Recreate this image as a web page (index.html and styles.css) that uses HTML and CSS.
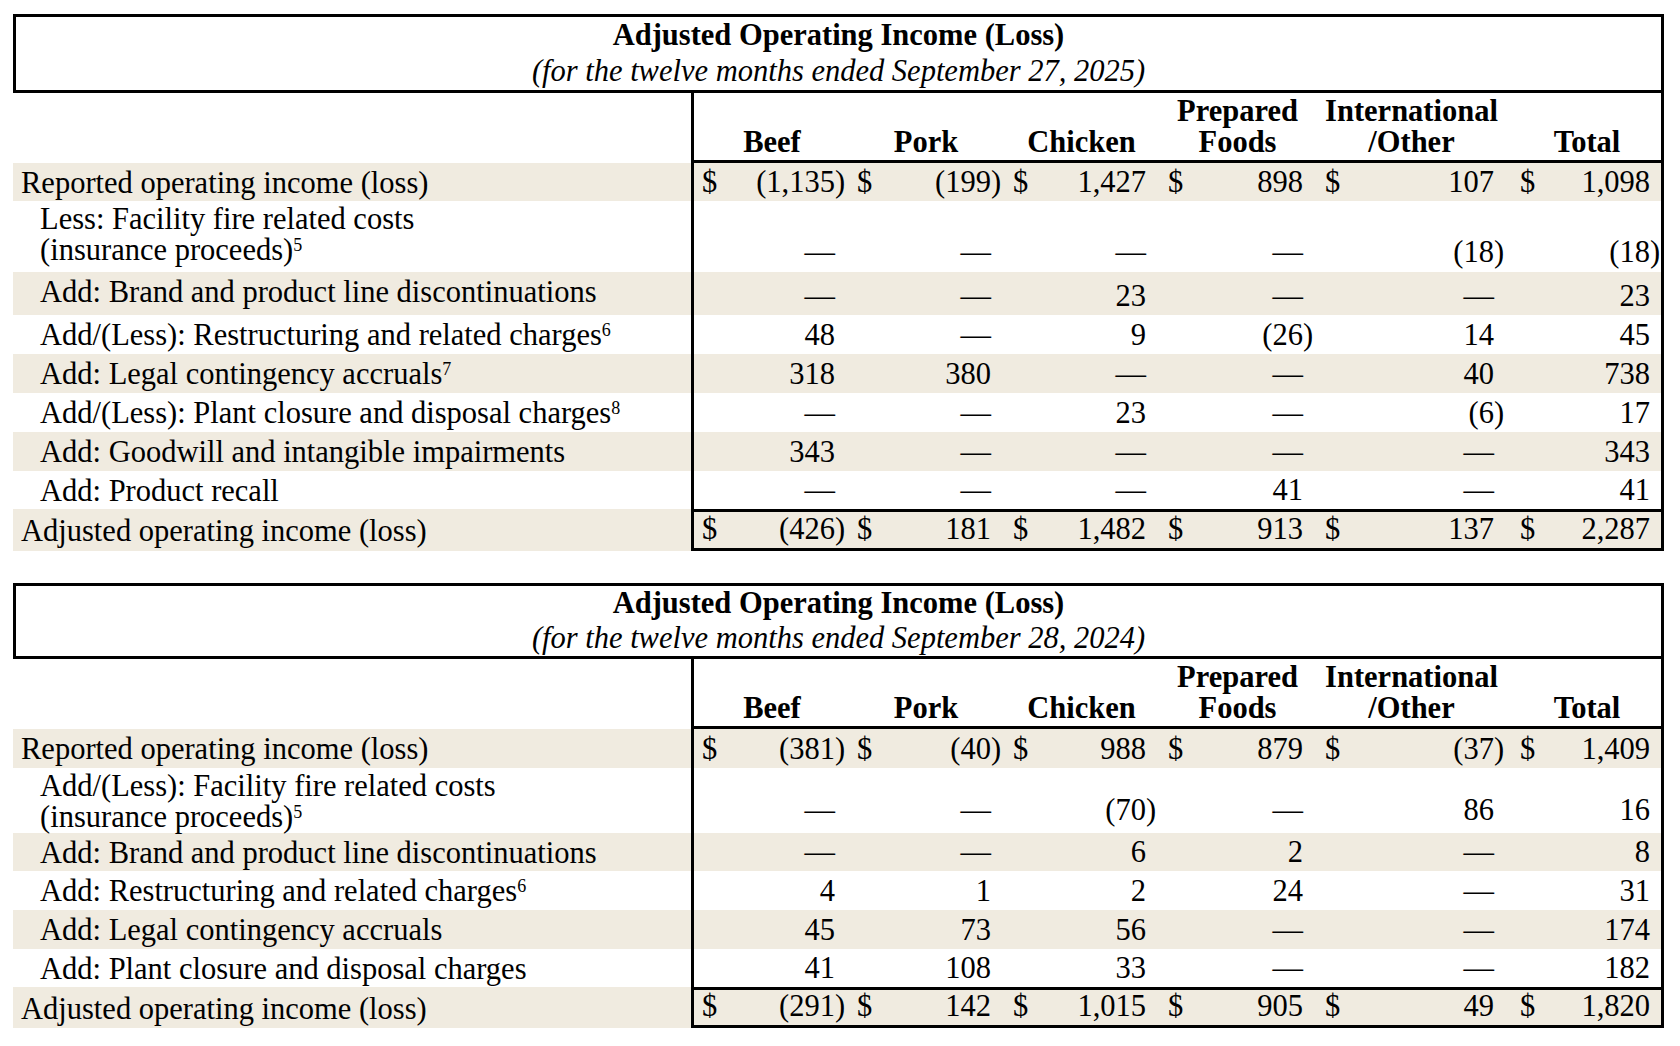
FILE: index.html
```html
<!DOCTYPE html>
<html lang="en">
<head>
<meta charset="utf-8">
<title>Adjusted Operating Income (Loss)</title>
<link rel="stylesheet" href="styles.css">
</head>
<body>
<main class="page">

<section class="tbl t1">
  <div class="cap">
    <div class="cap-title">Adjusted Operating Income (Loss)</div>
    <div class="cap-sub">(for the twelve months ended September 27, 2025)</div>
  </div>
  <div class="row head">
    <div class="lbl"></div>
    <div class="hd c1">Beef</div>
    <div class="hd">Pork</div>
    <div class="hd">Chicken</div>
    <div class="hd">Prepared<br>Foods</div>
    <div class="hd">International<br>/Other</div>
    <div class="hd c6">Total</div>
  </div>
  <div class="row shade h38">
    <div class="lbl">Reported operating income (loss)</div>
    <div class="v c1"><span class="cur">$</span><span class="n">(1,135</span><span class="p">)</span></div>
    <div class="v"><span class="cur">$</span><span class="n">(199</span><span class="p">)</span></div>
    <div class="v"><span class="cur">$</span><span class="n">1,427</span><span class="p"></span></div>
    <div class="v"><span class="cur">$</span><span class="n">898</span><span class="p"></span></div>
    <div class="v"><span class="cur">$</span><span class="n">107</span><span class="p"></span></div>
    <div class="v c6"><span class="cur">$</span><span class="n">1,098</span><span class="p"></span></div>
  </div>
  <div class="row h71">
    <div class="lbl ind">Less: Facility fire related costs<br>(insurance proceeds)<sup>5</sup></div>
    <div class="v c1"><span class="n">—</span><span class="p"></span></div>
    <div class="v"><span class="n">—</span><span class="p"></span></div>
    <div class="v"><span class="n">—</span><span class="p"></span></div>
    <div class="v"><span class="n">—</span><span class="p"></span></div>
    <div class="v"><span class="n">(18</span><span class="p">)</span></div>
    <div class="v c6"><span class="n">(18</span><span class="p">)</span></div>
  </div>
  <div class="row shade h43">
    <div class="lbl ind">Add: Brand and product line discontinuations</div>
    <div class="v c1"><span class="n">—</span><span class="p"></span></div>
    <div class="v"><span class="n">—</span><span class="p"></span></div>
    <div class="v"><span class="n">23</span><span class="p"></span></div>
    <div class="v"><span class="n">—</span><span class="p"></span></div>
    <div class="v"><span class="n">—</span><span class="p"></span></div>
    <div class="v c6"><span class="n">23</span><span class="p"></span></div>
  </div>
  <div class="row h39">
    <div class="lbl ind">Add/(Less): Restructuring and related charges<sup>6</sup></div>
    <div class="v c1"><span class="n">48</span><span class="p"></span></div>
    <div class="v"><span class="n">—</span><span class="p"></span></div>
    <div class="v"><span class="n">9</span><span class="p"></span></div>
    <div class="v"><span class="n">(26</span><span class="p">)</span></div>
    <div class="v"><span class="n">14</span><span class="p"></span></div>
    <div class="v c6"><span class="n">45</span><span class="p"></span></div>
  </div>
  <div class="row shade h39">
    <div class="lbl ind">Add: Legal contingency accruals<sup>7</sup></div>
    <div class="v c1"><span class="n">318</span><span class="p"></span></div>
    <div class="v"><span class="n">380</span><span class="p"></span></div>
    <div class="v"><span class="n">—</span><span class="p"></span></div>
    <div class="v"><span class="n">—</span><span class="p"></span></div>
    <div class="v"><span class="n">40</span><span class="p"></span></div>
    <div class="v c6"><span class="n">738</span><span class="p"></span></div>
  </div>
  <div class="row h39">
    <div class="lbl ind">Add/(Less): Plant closure and disposal charges<sup>8</sup></div>
    <div class="v c1"><span class="n">—</span><span class="p"></span></div>
    <div class="v"><span class="n">—</span><span class="p"></span></div>
    <div class="v"><span class="n">23</span><span class="p"></span></div>
    <div class="v"><span class="n">—</span><span class="p"></span></div>
    <div class="v"><span class="n">(6</span><span class="p">)</span></div>
    <div class="v c6"><span class="n">17</span><span class="p"></span></div>
  </div>
  <div class="row shade h39">
    <div class="lbl ind">Add: Goodwill and intangible impairments</div>
    <div class="v c1"><span class="n">343</span><span class="p"></span></div>
    <div class="v"><span class="n">—</span><span class="p"></span></div>
    <div class="v"><span class="n">—</span><span class="p"></span></div>
    <div class="v"><span class="n">—</span><span class="p"></span></div>
    <div class="v"><span class="n">—</span><span class="p"></span></div>
    <div class="v c6"><span class="n">343</span><span class="p"></span></div>
  </div>
  <div class="row h38">
    <div class="lbl ind">Add: Product recall</div>
    <div class="v c1"><span class="n">—</span><span class="p"></span></div>
    <div class="v"><span class="n">—</span><span class="p"></span></div>
    <div class="v"><span class="n">—</span><span class="p"></span></div>
    <div class="v"><span class="n">41</span><span class="p"></span></div>
    <div class="v"><span class="n">—</span><span class="p"></span></div>
    <div class="v c6"><span class="n">41</span><span class="p"></span></div>
  </div>
  <div class="row shade total h42">
    <div class="lbl">Adjusted operating income (loss)</div>
    <div class="v c1"><span class="cur">$</span><span class="n">(426</span><span class="p">)</span></div>
    <div class="v"><span class="cur">$</span><span class="n">181</span><span class="p"></span></div>
    <div class="v"><span class="cur">$</span><span class="n">1,482</span><span class="p"></span></div>
    <div class="v"><span class="cur">$</span><span class="n">913</span><span class="p"></span></div>
    <div class="v"><span class="cur">$</span><span class="n">137</span><span class="p"></span></div>
    <div class="v c6"><span class="cur">$</span><span class="n">2,287</span><span class="p"></span></div>
  </div>
</section>

<section class="tbl t2">
  <div class="cap">
    <div class="cap-title">Adjusted Operating Income (Loss)</div>
    <div class="cap-sub">(for the twelve months ended September 28, 2024)</div>
  </div>
  <div class="row head">
    <div class="lbl"></div>
    <div class="hd c1">Beef</div>
    <div class="hd">Pork</div>
    <div class="hd">Chicken</div>
    <div class="hd">Prepared<br>Foods</div>
    <div class="hd">International<br>/Other</div>
    <div class="hd c6">Total</div>
  </div>
  <div class="row shade h39">
    <div class="lbl">Reported operating income (loss)</div>
    <div class="v c1"><span class="cur">$</span><span class="n">(381</span><span class="p">)</span></div>
    <div class="v"><span class="cur">$</span><span class="n">(40</span><span class="p">)</span></div>
    <div class="v"><span class="cur">$</span><span class="n">988</span><span class="p"></span></div>
    <div class="v"><span class="cur">$</span><span class="n">879</span><span class="p"></span></div>
    <div class="v"><span class="cur">$</span><span class="n">(37</span><span class="p">)</span></div>
    <div class="v c6"><span class="cur">$</span><span class="n">1,409</span><span class="p"></span></div>
  </div>
  <div class="row h65">
    <div class="lbl ind">Add/(Less): Facility fire related costs<br>(insurance proceeds)<sup>5</sup></div>
    <div class="v c1"><span class="n">—</span><span class="p"></span></div>
    <div class="v"><span class="n">—</span><span class="p"></span></div>
    <div class="v"><span class="n">(70</span><span class="p">)</span></div>
    <div class="v"><span class="n">—</span><span class="p"></span></div>
    <div class="v"><span class="n">86</span><span class="p"></span></div>
    <div class="v c6"><span class="n">16</span><span class="p"></span></div>
  </div>
  <div class="row shade h38">
    <div class="lbl ind">Add: Brand and product line discontinuations</div>
    <div class="v c1"><span class="n">—</span><span class="p"></span></div>
    <div class="v"><span class="n">—</span><span class="p"></span></div>
    <div class="v"><span class="n">6</span><span class="p"></span></div>
    <div class="v"><span class="n">2</span><span class="p"></span></div>
    <div class="v"><span class="n">—</span><span class="p"></span></div>
    <div class="v c6"><span class="n">8</span><span class="p"></span></div>
  </div>
  <div class="row h39">
    <div class="lbl ind">Add: Restructuring and related charges<sup>6</sup></div>
    <div class="v c1"><span class="n">4</span><span class="p"></span></div>
    <div class="v"><span class="n">1</span><span class="p"></span></div>
    <div class="v"><span class="n">2</span><span class="p"></span></div>
    <div class="v"><span class="n">24</span><span class="p"></span></div>
    <div class="v"><span class="n">—</span><span class="p"></span></div>
    <div class="v c6"><span class="n">31</span><span class="p"></span></div>
  </div>
  <div class="row shade h39">
    <div class="lbl ind">Add: Legal contingency accruals</div>
    <div class="v c1"><span class="n">45</span><span class="p"></span></div>
    <div class="v"><span class="n">73</span><span class="p"></span></div>
    <div class="v"><span class="n">56</span><span class="p"></span></div>
    <div class="v"><span class="n">—</span><span class="p"></span></div>
    <div class="v"><span class="n">—</span><span class="p"></span></div>
    <div class="v c6"><span class="n">174</span><span class="p"></span></div>
  </div>
  <div class="row h38">
    <div class="lbl ind">Add: Plant closure and disposal charges</div>
    <div class="v c1"><span class="n">41</span><span class="p"></span></div>
    <div class="v"><span class="n">108</span><span class="p"></span></div>
    <div class="v"><span class="n">33</span><span class="p"></span></div>
    <div class="v"><span class="n">—</span><span class="p"></span></div>
    <div class="v"><span class="n">—</span><span class="p"></span></div>
    <div class="v c6"><span class="n">182</span><span class="p"></span></div>
  </div>
  <div class="row shade total h41">
    <div class="lbl">Adjusted operating income (loss)</div>
    <div class="v c1"><span class="cur">$</span><span class="n">(291</span><span class="p">)</span></div>
    <div class="v"><span class="cur">$</span><span class="n">142</span><span class="p"></span></div>
    <div class="v"><span class="cur">$</span><span class="n">1,015</span><span class="p"></span></div>
    <div class="v"><span class="cur">$</span><span class="n">905</span><span class="p"></span></div>
    <div class="v"><span class="cur">$</span><span class="n">49</span><span class="p"></span></div>
    <div class="v c6"><span class="cur">$</span><span class="n">1,820</span><span class="p"></span></div>
  </div>
</section>

</main>
</body>
</html>
```

FILE: styles.css
```css
* {
  box-sizing: border-box;
}

html, body {
  margin: 0;
  padding: 0;
  background: #ffffff;
}

body {
  font-family: "Liberation Serif", "Times New Roman", serif;
  font-size: 30.5px;
  color: #000000;
}

.page {
  padding: 14px 0 0 13px;
}

.tbl {
  width: 1651px;
}

.t2 {
  margin-top: 32px;
}

/* caption box */
.cap {
  border: 3px solid #000;
  text-align: center;
  line-height: 36px;
  padding: 0 0 1px;
}

.t2 .cap {
  line-height: 35px;
  padding: 0;
}

.cap-title {
  font-weight: bold;
}

.cap-sub {
  font-style: italic;
}

/* rows */
.row {
  display: grid;
  grid-template-columns: 678px 160px 156px 155px 157px 191px 154px;
}

.shade {
  background: #f0ebe0;
}

.head {
  height: 70px;
}

.h38 { height: 38px; }
.h39 { height: 39px; }
.h41 { height: 41px; }
.h42 { height: 42px; }
.h43 { height: 43px; }
.h65 { height: 65px; }
.h71 { height: 71px; }

/* label column */
.lbl {
  line-height: 32px;
  padding-top: 4px;
  padding-left: 8px;
  white-space: nowrap;
}

.lbl.ind {
  padding-left: 27px;
}

.h71 .lbl,
.h65 .lbl {
  line-height: 31px;
  padding-top: 3px;
}

.total .lbl {
  padding-top: 6px;
}

sup {
  font-size: 18px;
  line-height: 0;
  vertical-align: 9px;
}

/* header cells */
.hd {
  display: flex;
  flex-direction: column;
  justify-content: flex-end;
  text-align: center;
  font-weight: bold;
  line-height: 31px;
  padding: 0 6px 2px 0;
  border-bottom: 3px solid #000;
}

.hd.c1 {
  padding-left: 3px;
  padding-right: 4px;
}

.hd.c6 {
  padding-left: 3px;
  padding-right: 0;
}

/* value cells */
.v {
  display: flex;
  align-items: flex-end;
  justify-content: flex-end;
  line-height: 32px;
  padding: 0 5px 3px 6px;
  white-space: nowrap;
}

.h71 .v {
  padding-bottom: 4px;
}

.h65 .v {
  padding-bottom: 7px;
}

.c1 {
  border-left: 3px solid #000;
}

.v.c1 {
  padding-left: 8px;
}

.c6 {
  border-right: 3px solid #000;
}

.v.c6 {
  padding-left: 10px;
  padding-right: 0;
}

.cur {
  margin-right: auto;
}

.p {
  display: inline-block;
  width: 11px;
  text-align: left;
}

.total .v {
  border-top: 3px solid #000;
  border-bottom: 3px solid #000;
}
```
